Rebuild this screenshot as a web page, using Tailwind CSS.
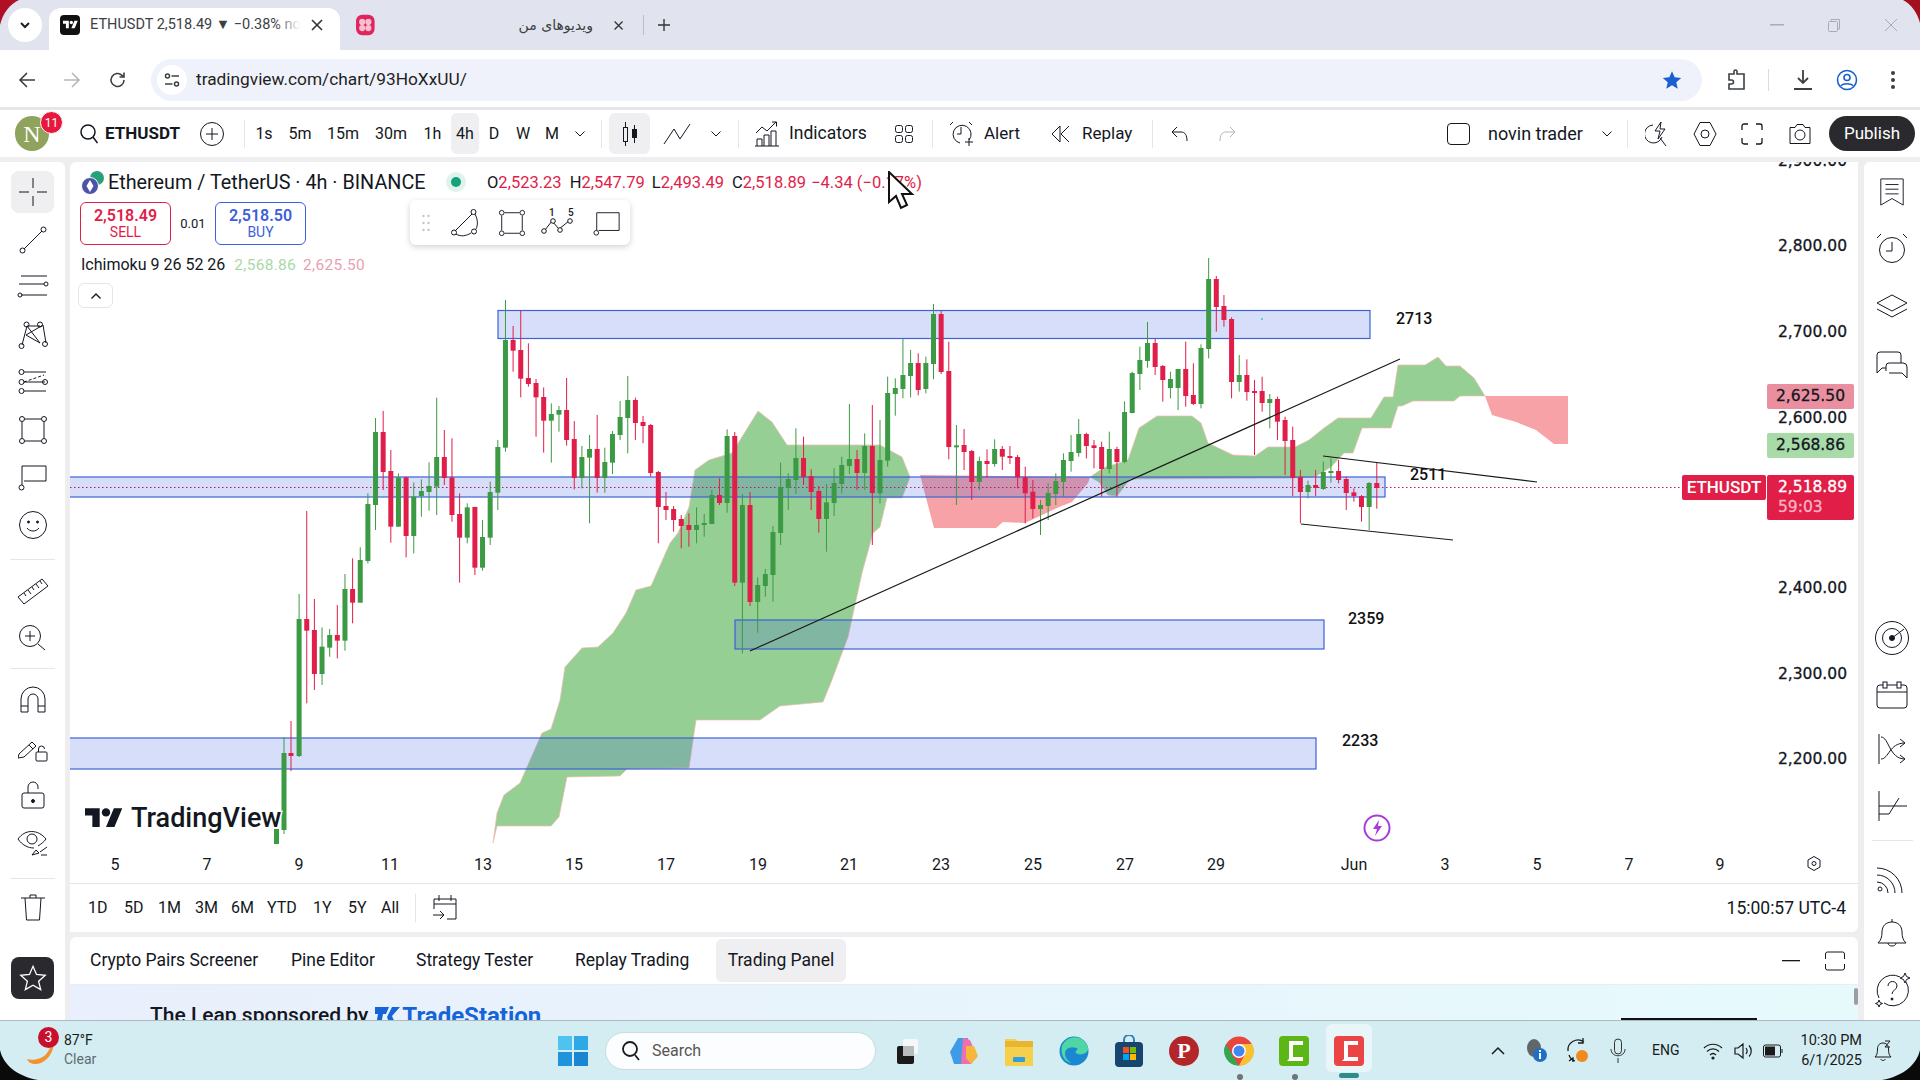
<!DOCTYPE html>
<html lang="en">
<head>
<meta charset="UTF-8">
<title>ETHUSDT chart</title>
<script src="https://cdn.jsdelivr.net/npm/@tailwindcss/browser@4"></script>
</head>
<body class="bg-[#eeeef1]">
<div class="relative w-[1920px] h-[1080px] overflow-hidden flex flex-col font-['Roboto',sans-serif] text-[#131722]">

  <!-- browser tab strip -->
  <div class="h-[50px] shrink-0 bg-[#e1e4ee] flex items-end">
    <div class="w-[34px] h-[34px] ml-[8px] mb-[8px] rounded-full bg-white flex items-center justify-center">
      <svg width="14" height="14" viewBox="0 0 14 14" fill="none" stroke="#1f1f1f" stroke-width="2"><path d="M3 5l4 4 4-4"/></svg>
    </div>
    <div class="relative w-[291px] h-[42px] pb-[8px] ml-[7px] bg-white rounded-t-xl flex items-center">
      <div class="ml-[11px] w-[20px] h-[20px] rounded-[4px] bg-[#111] flex items-center justify-center">
        <svg width="15" height="12" viewBox="0 0 36 28" fill="#fff"><path d="M14 22H7V11H0V4h14v18zM28 22h-8l7.5-18h8L28 22z"/><circle cx="20" cy="8" r="4"/></svg>
      </div>
      <div class="relative ml-[10px] w-[210px] overflow-hidden whitespace-nowrap text-[14.5px] text-[#3c4043]">ETHUSDT 2,518.49 ▼ −0.38% novin
        <div class="absolute right-0 top-0 w-[24px] h-full bg-linear-to-r from-white/0 to-white"></div>
      </div>
      <svg class="ml-[10px]" width="14" height="14" viewBox="0 0 14 14" stroke="#333" stroke-width="1.6"><path d="M2 2l10 10M12 2L2 12"/></svg>
    </div>
    <div class="relative w-[330px] h-[42px] pb-[8px] flex items-center">
      <svg class="ml-[15px]" width="24" height="26" viewBox="0 0 20 22"><rect x="1" y="1" width="18" height="20" rx="6" fill="#e0245e"/><g fill="#f7c0d2"><circle cx="7" cy="8" r="3"/><circle cx="13" cy="8" r="3"/><circle cx="7" cy="14" r="3"/><circle cx="13" cy="14" r="3"/></g></svg>
      <span dir="rtl" class="ml-[143px] w-[82px] text-[14px] text-[#3c4043] whitespace-nowrap font-['DejaVu_Sans',sans-serif]">ویدیوهای من</span>
      <svg class="ml-[20px]" width="13" height="13" viewBox="0 0 14 14" stroke="#333" stroke-width="1.6"><path d="M2 2l10 10M12 2L2 12"/></svg>
      <div class="ml-[19px] w-px h-[20px] bg-[#b9bcc6]"></div>
      <svg class="ml-[14px]" width="14" height="14" viewBox="0 0 14 14" stroke="#333" stroke-width="1.6"><path d="M7 0v14M0 7h14"/></svg>
    </div>
    <div class="ml-auto h-[42px] pb-[8px] flex items-center text-[#9aa0a6]">
      <svg width="14" height="2" viewBox="0 0 14 2" class="mr-[43px]"><rect width="14" height="1.5" fill="#a9acb6"/></svg>
      <svg width="14" height="14" viewBox="0 0 14 14" fill="none" stroke="#a9acb6" class="mr-[43px]"><rect x="1.5" y="3.5" width="9" height="10" rx="1"/><path d="M4 3V1.5h8.5V11H11"/></svg>
      <svg width="14" height="14" viewBox="0 0 14 14" stroke="#a9acb6" class="mr-[22px]"><path d="M1 1l12 12M13 1L1 13"/></svg>
    </div>
  </div>

  <!-- browser address row -->
  <div class="h-[57px] pt-[2px] shrink-0 bg-white flex items-center">
    <svg class="ml-[18px]" width="18" height="18" viewBox="0 0 18 18" fill="none" stroke="#3c4043" stroke-width="1.6"><path d="M17 9H2M9 2L2 9l7 7"/></svg>
    <svg class="ml-[27px]" width="18" height="18" viewBox="0 0 18 18" fill="none" stroke="#b4b7bc" stroke-width="1.6"><path d="M1 9h15M9 2l7 7-7 7"/></svg>
    <svg class="ml-[28px]" width="18" height="18" viewBox="0 0 18 18" fill="none" stroke="#3c4043" stroke-width="1.6"><path d="M15 9a6.5 6.5 0 1 1-2-4.7L15 6M15 1.5V6h-4.5"/></svg>
    <div class="ml-[24px] w-[1551px] h-[42px] rounded-full bg-[#eff2fb] flex items-center">
      <div class="ml-[6px] w-[30px] h-[30px] rounded-full bg-white flex items-center justify-center">
        <svg width="16" height="16" viewBox="0 0 16 16" fill="none" stroke="#3c4043" stroke-width="1.5"><circle cx="3.5" cy="4" r="2"/><path d="M7.5 4H15M1 12h7.5"/><circle cx="12.5" cy="12" r="2"/></svg>
      </div>
      <span class="ml-[9px] text-[17.3px] text-[#1f1f1f] w-[300px] whitespace-nowrap">tradingview.com/chart/93HoXxUU/</span>
      <svg class="ml-auto mr-[20px]" width="20" height="20" viewBox="0 0 24 24" fill="#1a5fd0"><path d="M12 1.5l3.2 7.2 7.8.8-5.9 5.2 1.8 7.8L12 18.4l-6.9 4.1 1.8-7.8L1 9.5l7.8-.8z"/></svg>
    </div>
    <svg class="ml-[25px]" width="20" height="22" viewBox="0 0 20 22" fill="none" stroke="#3c4043" stroke-width="1.6"><path d="M2 5h5V2.5a1.5 1.5 0 0 1 3 0V5h7v15H2v-5h2.5a2 2 0 0 0 0-4H2z"/></svg>
    <div class="ml-[21px] w-px h-[22px] bg-[#d7dbe2]"></div>
    <svg class="ml-[24px]" width="20" height="22" viewBox="0 0 20 22" fill="none" stroke="#3c4043" stroke-width="1.8"><path d="M10 1v13M5 9l5 5 5-5M1 20h18"/></svg>
    <svg class="ml-[23px]" width="22" height="22" viewBox="0 0 22 22" fill="none" stroke="#1a5fd0" stroke-width="1.6"><circle cx="11" cy="11" r="9.5"/><circle cx="11" cy="8.5" r="3"/><path d="M5 17c1.5-3 10.5-3 12 0"/></svg>
    <svg class="ml-[33px]" width="4" height="18" viewBox="0 0 4 18" fill="#3c4043"><circle cx="2" cy="2" r="2"/><circle cx="2" cy="9" r="2"/><circle cx="2" cy="16" r="2"/></svg>
  </div>
  <div class="h-[3px] shrink-0 bg-[#e6e6ea]"></div>

  <!-- chart top toolbar -->
  <div class="h-[47px] shrink-0 bg-white flex items-center text-[16px] whitespace-nowrap">
    <div class="relative ml-[15px] w-[34px] h-[35px] shrink-0 rounded-full bg-[#8fa35c] text-white text-[24px] flex items-center justify-center font-['Liberation_Serif',serif]">N
      <div class="absolute -top-[5px] left-[25px] w-[23px] h-[23px] rounded-full bg-[#e8173d] border border-white text-[12px] flex items-center justify-center font-['Roboto',sans-serif]">11</div>
    </div>
    <svg class="ml-[31px] shrink-0" width="18" height="20" viewBox="0 0 18 20" fill="none" stroke="#131722" stroke-width="1.5"><circle cx="8" cy="8" r="7"/><path d="M13 13l4.5 6"/></svg>
    <span class="ml-[7px] w-[95px] shrink-0 font-bold text-[17px]">ETHUSDT</span>
    <svg class="shrink-0" width="24" height="24" viewBox="0 0 24 24" fill="none" stroke="#131722"><circle cx="12" cy="12" r="11.5"/><path d="M12 6v12M6 12h12"/></svg>
    <div class="ml-[20px] w-px h-[28px] shrink-0 bg-[#e6e6ea]"></div>
    <div class="ml-px w-[36px] text-center shrink-0">1s</div>
    <div class="w-[36px] text-center shrink-0">5m</div>
    <div class="w-[50px] text-center shrink-0">15m</div>
    <div class="w-[46px] text-center shrink-0">30m</div>
    <div class="w-[37px] text-center shrink-0">1h</div>
    <div class="w-[28px] h-[41px] leading-[41px] text-center shrink-0 rounded-md bg-[#efeff2]">4h</div>
    <div class="w-[30px] text-center shrink-0">D</div>
    <div class="w-[28px] text-center shrink-0">W</div>
    <div class="w-[30px] text-center shrink-0">M</div>
    <div class="w-[26px] flex justify-center shrink-0"><svg width="12" height="8" viewBox="0 0 12 8" fill="none" stroke="#131722"><path d="M1.5 1.5L6 6l4.5-4.5"/></svg></div>
    <div class="ml-[8px] w-px h-[28px] shrink-0 bg-[#e6e6ea]"></div>
    <div class="ml-[7px] w-[41px] h-[41px] rounded-md bg-[#efeff2] flex items-center justify-center shrink-0">
      <svg width="18" height="28" viewBox="0 0 18 28" fill="none" stroke="#131722"><rect x="2.5" y="7.5" width="4" height="14"/><path d="M4.5 2v5.5M4.5 21.500V26"/><rect x="11.5" y="9.5" width="4" height="8" fill="#131722"/><path d="M13.5 5v4.5M13.5 17.5V23"/></svg>
    </div>
    <div class="w-[54px] flex justify-center shrink-0"><svg width="28" height="24" viewBox="0 0 28 24" fill="none" stroke="#131722"><path d="M1 22L11 7l6 10L27 2"/></svg></div>
    <div class="w-[24px] flex justify-center shrink-0"><svg width="12" height="8" viewBox="0 0 12 8" fill="none" stroke="#131722"><path d="M1.5 1.5L6 6l4.5-4.5"/></svg></div>
    <div class="ml-[10px] w-px h-[28px] shrink-0 bg-[#e6e6ea]"></div>
    <svg class="ml-[16px] shrink-0" width="26" height="26" viewBox="0 0 26 26" fill="none" stroke="#131722"><path d="M1 12l6-6 5 4 9-9M17 1h4.5v4.5"/><path d="M2 25v-7h5v7M9 25V14h5v11M16 25V10h5v15M0 25h24"/></svg>
    <span class="ml-[8px] w-[78px] shrink-0 text-[17.5px]">Indicators</span>
    <svg class="ml-[25px] shrink-0" width="24" height="24" viewBox="0 0 24 24" fill="none" stroke="#131722"><rect x="3.5" y="3.5" width="7" height="7" rx="2"/><rect x="13.5" y="3.5" width="7" height="7" rx="2"/><rect x="3.5" y="13.5" width="7" height="7" rx="2"/><rect x="13.5" y="13.5" width="7" height="7" rx="2"/></svg>
    <div class="ml-[16px] w-px h-[28px] shrink-0 bg-[#e6e6ea]"></div>
    <svg class="ml-[17px] shrink-0" width="24" height="26" viewBox="0 0 24 26" fill="none" stroke="#131722"><path d="M19 19a9 9 0 1 0-9 3"/><path d="M11 6v7H7M3 1L0 4M19 1l3 3M19 17v8M15 21h8"/></svg>
    <span class="ml-[10px] w-[38px] shrink-0 text-[17px]">Alert</span>
    <svg class="ml-[29px] shrink-0" width="20" height="20" viewBox="0 0 20 20" fill="none" stroke="#131722"><path d="M9 2L1 10l8 8zM18 2l-8 8 8 8"/></svg>
    <span class="ml-[11px] w-[52px] shrink-0 text-[17px]">Replay</span>
    <div class="ml-[18px] w-px h-[28px] shrink-0 bg-[#e6e6ea]"></div>
    <svg class="ml-[17px] shrink-0" width="20" height="20" viewBox="0 0 20 20" fill="none" stroke="#131722"><path d="M7 3L2 8l5 5M2 8h9c4 0 6 3 6 9"/></svg>
    <svg class="ml-[27px] shrink-0" width="20" height="20" viewBox="0 0 20 20" fill="none" stroke="#b2b5be"><path d="M13 3l5 5-5 5M18 8H9c-4 0-6 3-6 9"/></svg>
    <div class="ml-[210px] w-[23px] h-[22px] shrink-0 rounded-[4px] border border-[#131722]"></div>
    <span class="ml-[18px] w-[97px] shrink-0 text-[18px]">novin trader</span>
    <div class="ml-[15px] w-[14px] flex justify-center shrink-0"><svg width="12" height="8" viewBox="0 0 12 8" fill="none" stroke="#131722"><path d="M1.5 1.5L6 6l4.5-4.5"/></svg></div>
    <div class="ml-[13px] w-px h-[28px] shrink-0 bg-[#e6e6ea]"></div>
    <svg class="ml-[17px] shrink-0" width="24" height="26" viewBox="0 0 24 26" fill="none" stroke="#131722"><path d="M8 4a9 9 0 1 0 9 12M15 17l6 8M16 1l-6 9h5l-2 8 7-10h-5z"/></svg>
    <svg class="ml-[24px] shrink-0" width="24" height="26" viewBox="0 0 24 26" fill="none" stroke="#131722"><path d="M7 1.5h10L23 13l-6 11.5H7L1 13z"/><circle cx="12" cy="13" r="4"/></svg>
    <svg class="ml-[23px] shrink-0" width="24" height="24" viewBox="0 0 24 24" fill="none" stroke="#131722" stroke-width="1.3"><path d="M8 2H4a2 2 0 0 0-2 2v4M16 2h4a2 2 0 0 1 2 2v4M8 22H4a2 2 0 0 1-2-2v-4M16 22h4a2 2 0 0 0 2-2v-4"/></svg>
    <svg class="ml-[24px] shrink-0" width="24" height="24" viewBox="0 0 24 24" fill="none" stroke="#131722"><path d="M2 5.5h5l2-3h6l2 3h5v16H2z"/><circle cx="12" cy="13" r="5"/></svg>
    <div class="ml-[17px] w-[86px] h-[35px] shrink-0 rounded-full bg-[#2a2a2e] text-white text-[17px] flex items-center justify-center">Publish</div>
  </div>

  <div class="h-[5px] shrink-0"></div>

  <div class="flex-1 flex min-h-0">
    <!-- left drawing tools -->
    <div class="w-[65px] shrink-0 bg-white rounded-tr-md flex flex-col items-center pt-[6.5px]">
      <div class="h-[47.5px] flex items-center"><div class="w-[43px] h-[42px] rounded-lg bg-[#efeff2] flex items-center justify-center"><svg width="30" height="30" viewBox="0 0 30 30" stroke="#131722"><path d="M15 1v10M15 19v10M1 15h10M19 15h10"/></svg></div></div>
      <div class="h-[47.5px] flex items-center"><svg width="30" height="30" viewBox="0 0 30 30" fill="none" stroke="#131722"><path d="M6 24L24 6"/><circle cx="4.5" cy="25.5" r="2.5"/><circle cx="25.5" cy="4.5" r="2.5"/></svg></div>
      <div class="h-[47.5px] flex items-center"><svg width="32" height="30" viewBox="0 0 32 30" fill="none" stroke="#131722"><path d="M4 4h26M2 12h25M4 23h26"/><circle cx="29" cy="12" r="2"/><circle cx="3" cy="23" r="2"/></svg></div>
      <div class="h-[47.5px] flex items-center"><svg width="30" height="30" viewBox="0 0 30 30" fill="none" stroke="#131722"><path d="M4 25L9 6l13 17-14-8 17-10 3 18M9 6l13 0"/><circle cx="3.5" cy="26" r="2.5"/><circle cx="8.5" cy="4.5" r="2.5"/><circle cx="22" cy="4.5" r="2.5"/><circle cx="27" cy="24" r="2.5"/></svg></div>
      <div class="h-[47.5px] flex items-center"><svg width="30" height="30" viewBox="0 0 30 30" fill="none" stroke="#131722"><path d="M6 5h22M6 15h21M6 24h22"/><path stroke-dasharray="3 2" d="M6 15l20-7"/><circle cx="3.5" cy="5" r="2.5"/><circle cx="3.5" cy="15" r="2.5"/><circle cx="3.5" cy="24" r="2.5"/><circle cx="27" cy="15" r="2.5"/></svg></div>
      <div class="h-[47.5px] flex items-center"><svg width="30" height="30" viewBox="0 0 30 30" fill="none" stroke="#131722"><path d="M7 4h16M7 26h16M4 7v16M26 7v16"/><circle cx="4" cy="4" r="2.5"/><circle cx="26" cy="4" r="2.5"/><circle cx="4" cy="26" r="2.5"/><circle cx="26" cy="26" r="2.5"/></svg></div>
      <div class="h-[47.5px] flex items-center"><svg width="30" height="30" viewBox="0 0 30 30" fill="none" stroke="#131722"><path d="M4 23V4h24v15H6"/><circle cx="3.5" cy="25.5" r="2.5"/></svg></div>
      <div class="h-[47.5px] flex items-center"><svg width="30" height="30" viewBox="0 0 30 30" fill="none" stroke="#131722"><circle cx="15" cy="15" r="13.5"/><circle cx="10.5" cy="12" r="1" fill="#131722"/><circle cx="19.5" cy="12" r="1" fill="#131722"/><path d="M9 18c3 4 9 4 12 0"/></svg></div>
      <div class="mt-[10px] mb-[6px] w-[45px] h-px bg-[#e6e6ea]"></div>
      <div class="h-[48px] flex items-center"><svg width="32" height="30" viewBox="0 0 32 30" fill="none" stroke="#131722"><path d="M1 22L25 4l6 7L7 29zM7 18l2 3M11 15l3 4M15 12l2 3M19 9l3 4M23 6l2 3"/></svg></div>
      <div class="h-[48px] flex items-center"><svg width="30" height="28" viewBox="0 0 30 28" fill="none" stroke="#131722"><circle cx="12" cy="12" r="10.5"/><path d="M12 7v10M7 12h10M20 20l7 6"/></svg></div>
      <div class="mt-[6px] mb-[8px] w-[45px] h-px bg-[#e6e6ea]"></div>
      <div class="h-[47.5px] flex items-center"><svg width="28" height="28" viewBox="0 0 28 28" fill="none" stroke="#131722"><path d="M2 26V13a12 12 0 0 1 24 0v13h-7V13a5 5 0 0 0-10 0v13zM2 20h7M19 20h7"/></svg></div>
      <div class="h-[47.5px] flex items-center"><svg width="30" height="30" viewBox="0 0 30 30" fill="none" stroke="#131722"><path d="M1 21L14 9l4 4L6 24l-6 1zM11 12l4 4"/><rect x="18" y="19" width="11" height="9" rx="1"/><path d="M20.5 19v-3a3 3 0 0 1 6 0"/></svg></div>
      <div class="h-[47.5px] flex items-center"><svg width="26" height="30" viewBox="0 0 26 30" fill="none" stroke="#131722"><rect x="2" y="13" width="22" height="15" rx="2"/><path d="M8 13V7a5 5 0 0 1 10 0v2"/><circle cx="13" cy="21" r="1.5" fill="#131722"/></svg></div>
      <div class="h-[47.5px] flex items-center"><svg width="32" height="30" viewBox="0 0 32 30" fill="none" stroke="#131722"><path d="M1 11c7-10 20-10 28 0-2 3-5 5-8 7M17 20c-6 0-12-3-16-9"/><circle cx="15" cy="11" r="5"/><path d="M15 27l4-5 3 3zM23 24l7-5M24 27h6"/></svg></div>
      <div class="mt-[11px] mb-[4px] w-[45px] h-px bg-[#e6e6ea]"></div>
      <div class="h-[48px] flex items-center"><svg width="26" height="28" viewBox="0 0 26 28" fill="none" stroke="#131722"><path d="M1 5h24M5 5l1.5 22h13L21 5M10 5V2h6v3"/></svg></div>
      <div class="mt-auto mb-[21px] w-[43px] h-[42px] rounded-lg bg-[#2a2a2e] flex items-center justify-center">
        <svg width="28" height="28" viewBox="0 0 24 24" fill="none" stroke="#fff" stroke-width="1.1"><path d="M12 2l3 7 7.5.7-5.7 5 1.8 7.3L12 18.2 5.4 22l1.8-7.3-5.7-5L9 9z"/></svg>
      </div>
    </div>

    <div class="w-[5px] shrink-0"></div>

    <!-- chart and its panels -->
    <div class="w-[1788px] shrink-0 flex flex-col">
      <div class="relative h-[721px] shrink-0 bg-white rounded-tl-md overflow-hidden">
        <svg id="chart" width="1788" height="721" viewBox="70 162 1788 721" class="block"></svg>

        <!-- legend -->
        <div class="absolute left-[11px] top-[8px] w-[24px] h-[24px]">
          <svg width="24" height="26" viewBox="0 0 24 26"><circle cx="16" cy="8" r="7" fill="#26a17b"/><circle cx="9" cy="16" r="8.5" fill="#4a54a8" stroke="#fff"/><path d="M9 10l3.5 6-3.5 6-3.5-6z" fill="#fff"/></svg>
        </div>
        <div class="absolute left-[38px] top-[9px] text-[19.8px] leading-[24px] whitespace-nowrap">Ethereum / TetherUS · 4h · BINANCE</div>
        <div class="absolute left-[376px] top-[10px] w-[20px] h-[20px] rounded-full bg-[#dff3ec] flex items-center justify-center"><div class="w-[10px] h-[10px] rounded-full bg-[#12a37a]"></div></div>
        <div class="absolute left-[417px] top-[10px] text-[16.5px] leading-[22px] whitespace-nowrap text-[#e01e4a]"><span class="text-[#131722]">O</span>2,523.23 <span class="text-[#131722] ml-[4px]">H</span>2,547.79 <span class="text-[#131722] ml-[3px]">L</span>2,493.49 <span class="text-[#131722] ml-[4px]">C</span>2,518.89 <span class="ml-[1px]">−4.34 (−0.17%)</span></div>

        <div class="absolute left-[10px] top-[40px] flex items-center">
          <div class="w-[91px] h-[43px] rounded-md border border-[#e01e4a] bg-white text-[#e01e4a] flex flex-col items-center justify-center leading-[17px]">
            <span class="text-[16px] font-semibold">2,518.49</span><span class="text-[14px]">SELL</span>
          </div>
          <div class="w-[44px] text-center text-[13px]">0.01</div>
          <div class="w-[91px] h-[43px] rounded-md border border-[#3d5fd9] bg-white text-[#3d5fd9] flex flex-col items-center justify-center leading-[17px]">
            <span class="text-[16px] font-semibold">2,518.50</span><span class="text-[14px]">BUY</span>
          </div>
        </div>
        <div class="absolute left-[11px] top-[93px] text-[16px] leading-[20px] whitespace-nowrap">Ichimoku 9 26 52 26 <span class="ml-[5px] text-[15.5px] tracking-[0.3px] text-[#a9d9a9]">2,568.86</span> <span class="ml-[3px] text-[15.5px] tracking-[0.3px] text-[#eba0b2]">2,625.50</span></div>
        <div class="absolute left-[8px] top-[121px] w-[35px] h-[25px] rounded-md border border-[#e6e6ea] bg-white flex items-center justify-center">
          <svg width="12" height="8" viewBox="0 0 12 8" fill="none" stroke="#131722" stroke-width="1.4"><path d="M1.5 6.5L6 2l4.5 4.5"/></svg>
        </div>

        <!-- floating favourites toolbar -->
        <div class="absolute left-[340px] top-[38px] w-[220px] h-[45px] rounded-md bg-white shadow-[0_2px_6px_rgba(0,0,0,0.18)] flex items-center">
          <svg class="ml-[12px]" width="8" height="18" viewBox="0 0 8 18" fill="#c4c6cc"><circle cx="1.5" cy="2" r="1.2"/><circle cx="6.5" cy="2" r="1.2"/><circle cx="1.5" cy="9" r="1.2"/><circle cx="6.5" cy="9" r="1.2"/><circle cx="1.5" cy="16" r="1.2"/><circle cx="6.5" cy="16" r="1.2"/></svg>
          <svg class="ml-[20px]" width="30" height="30" viewBox="0 0 30 30" fill="none" stroke="#131722"><path d="M5 23L22 6M25 6c3 6 3 11 1 15M6 26c5 3 10 2 15-1"/><circle cx="4" cy="24.5" r="2.5"/><circle cx="23.5" cy="4" r="2.5"/><circle cx="24" cy="23.5" r="2.5"/></svg>
          <svg class="ml-[18px]" width="28" height="28" viewBox="0 0 30 30" fill="none" stroke="#131722"><path d="M7 4h16M7 26h16M4 7v16M26 7v16"/><circle cx="4" cy="4" r="2.5"/><circle cx="26" cy="4" r="2.5"/><circle cx="4" cy="26" r="2.5"/><circle cx="26" cy="26" r="2.5"/></svg>
          <div class="ml-[15px] relative w-[34px] h-[30px]">
            <svg width="34" height="30" viewBox="0 0 34 30" fill="none" stroke="#131722"><path d="M4 22l7-9 7 8 10-8"/><circle cx="3" cy="23" r="2.3" fill="#fff"/><circle cx="12" cy="13" r="2.3" fill="#fff"/><circle cx="19" cy="22" r="2.3" fill="#fff"/><circle cx="29" cy="13" r="2.3" fill="#fff"/></svg>
            <span class="absolute left-[8px] -top-[3px] text-[10px] font-medium">1</span><span class="absolute left-[27px] -top-[3px] text-[10px] font-medium">5</span>
          </div>
          <svg class="ml-[18px]" width="28" height="28" viewBox="0 0 30 30" fill="none" stroke="#131722"><path d="M4 23V4h24v19H6"/><circle cx="3.5" cy="25.5" r="2.5"/></svg>
        </div>

        <!-- last price tags -->
        <div class="absolute left-[1697px] top-[222px] w-[87px] h-[25px] rounded-[2px] bg-[#ea8f9f] text-[15.5px] leading-[25px] text-center font-['DejaVu_Sans',sans-serif] [-webkit-text-stroke:0.3px]">2,625.50</div>
        <div class="absolute left-[1697px] top-[271px] w-[87px] h-[25px] rounded-[2px] bg-[#a8dba8] text-[15.5px] leading-[25px] text-center font-['DejaVu_Sans',sans-serif] [-webkit-text-stroke:0.3px]">2,568.86</div>
        <div class="absolute left-[1612px] top-[313px] w-[84px] h-[25px] rounded-[2px] bg-[#e01e47] text-white text-[17px] font-medium leading-[25px] text-center">ETHUSDT</div>
        <div class="absolute left-[1697px] top-[313px] w-[87px] h-[45px] rounded-[2px] bg-[#e01e47] text-white text-[15.5px] leading-[20px] pt-[2px] pl-[11px] font-['DejaVu_Sans',sans-serif] [-webkit-text-stroke:0.3px]">2,518.89<br><span class="text-[#f9b4c2]">59:03</span></div>

        <!-- mouse pointer from the recording -->
        <svg class="absolute left-[817px] top-[9px]" width="30" height="42" viewBox="0 0 30 42"><path d="M2 1v30l7-6 5 12 6-3-5-11h10z" fill="#fff" stroke="#111" stroke-width="2"/></svg>
      </div>

      <!-- date range row -->
      <div class="h-[49px] shrink-0 bg-white border-t border-[#e6e6ea] rounded-br-md flex items-center text-[16px] whitespace-nowrap">
        <span class="ml-[18px] w-[36px]">1D</span><span class="w-[34px]">5D</span><span class="w-[37px]">1M</span><span class="w-[36px]">3M</span><span class="w-[36px]">6M</span><span class="w-[46px]">YTD</span><span class="w-[35px]">1Y</span><span class="w-[33px]">5Y</span><span class="w-[34px]">All</span>
        <div class="w-px h-[28px] bg-[#e6e6ea]"></div>
        <svg class="ml-[16px]" width="26" height="28" viewBox="0 0 26 28" fill="none" stroke="#131722"><path d="M2 15V5h22v20h-9M2 10h22M7 1v6M19 1v6M1 21h11M8 17l4 4-4 4"/></svg>
        <span class="ml-auto mr-[12px] text-[17.5px]">15:00:57 UTC-4</span>
      </div>
      <div class="h-[5px] shrink-0"></div>

      <!-- bottom panel tabs -->
      <div class="h-[47px] shrink-0 bg-white rounded-t-md flex items-center text-[17.5px] whitespace-nowrap">
        <span class="ml-[20px] w-[168px]">Crypto Pairs Screener</span>
        <span class="ml-[33px] w-[85px]">Pine Editor</span>
        <span class="ml-[40px] w-[119px]">Strategy Tester</span>
        <span class="ml-[40px] w-[114px]">Replay Trading</span>
        <div class="ml-[27px] w-[130px] h-[43px] rounded-md bg-[#efeff2] flex items-center justify-center">Trading Panel</div>
        <svg class="ml-auto mr-[24px]" width="18" height="4" viewBox="0 0 18 4"><rect y="1" width="18" height="1.3" fill="#131722"/></svg>
        <svg class="mr-[12px]" width="22" height="22" viewBox="0 0 22 22" fill="none" stroke="#131722"><path d="M1.5 9V4a2 2 0 0 1 2-2h15a2 2 0 0 1 2 2v5M1.5 14v4a2 2 0 0 0 2 2h15a2 2 0 0 0 2-2v-4"/></svg>
      </div>
      <div class="relative flex-1 bg-linear-to-r from-[#e9effc] to-[#e6fafc] border-t border-[#e9ecf2] overflow-hidden">
        <div class="absolute left-[80px] top-[13px] flex items-center text-[21px] font-medium whitespace-nowrap">The Leap sponsored by
          <svg class="ml-[7px]" width="26" height="20" viewBox="0 0 26 20" fill="#1565d8"><path d="M0 1h14l-3 7H8l-2 11H1L3 8H0zM17 1h8l-8 9 4 9h-6l-3-8z"/></svg>
          <span class="ml-[1px] text-[24px] text-[#1565d8] font-bold">TradeStation</span>
        </div>
        <div class="absolute left-[1551px] bottom-0 w-[136px] h-[2px] bg-[#111]"></div>
        <div class="absolute right-[0px] top-[3px] w-[4px] h-[17px] rounded-full bg-[#9b9ea6]"></div>
      </div>
    </div>

    <div class="w-[6px] shrink-0"></div>

    <!-- right widget bar -->
    <div class="flex-1 bg-white rounded-tl-md flex flex-col items-center pt-[6px]">
      <div class="h-[48px] flex items-center"><svg width="28" height="32" viewBox="0 0 30 32" fill="none" stroke="#131722"><path d="M3 2h24v28l-12-7-12 7zM8 8h14M8 13h14M8 18h14"/></svg></div>
      <div class="h-[64px] flex items-center"><svg width="32" height="32" viewBox="0 0 32 32" fill="none" stroke="#131722"><circle cx="16" cy="18" r="12.5"/><path d="M16 10v9h-6M5 2L1 6M27 2l4 4"/></svg></div>
      <div class="h-[52px] flex items-center"><svg width="32" height="28" viewBox="0 0 32 28" fill="none" stroke="#131722"><path d="M1 11L16 3l15 8-15 8zM1 17l15 8 15-8"/></svg></div>
      <div class="h-[66px] flex items-center"><svg width="32" height="30" viewBox="0 0 32 30" fill="none" stroke="#131722"><path d="M10 18H6l-5 5V5a3 3 0 0 1 3-3h18a3 3 0 0 1 3 3v8H13a3 3 0 0 0-3 3v5M25 13h2a4 4 0 0 1 4 4v11l-5-5H13"/></svg></div>
      <div class="h-[214px]"></div>
      <div class="h-[52px] flex items-center"><svg width="36" height="36" viewBox="0 0 36 36" fill="none" stroke="#131722"><circle cx="18" cy="18" r="16.5"/><circle cx="18" cy="18" r="9.5"/><circle cx="18" cy="18" r="2.5" fill="#131722"/><path d="M18 18L30 9"/></svg></div>
      <div class="h-[62px] flex items-center"><svg width="32" height="28" viewBox="0 0 32 28" fill="none" stroke="#131722"><rect x="1" y="4" width="30" height="23" rx="3"/><path d="M1 11h30"/><rect x="7" y="1" width="4" height="6" fill="#fff"/><rect x="21" y="1" width="4" height="6" fill="#fff"/></svg></div>
      <div class="h-[46px] flex items-center"><svg width="32" height="32" viewBox="0 0 32 32" fill="none" stroke="#131722"><path d="M3 1v30M5 4c8 0 8 22 24 22M5 26c8 0 8-16 24-16M24 6l5 4-5 4M24 22l5 4-5 4"/></svg></div>
      <div class="h-[68px] flex items-center"><svg width="32" height="32" viewBox="0 0 32 32" fill="none" stroke="#131722"><path d="M3 1v30M3 24h10l10-16M3 16h28"/></svg></div>
      <div class="w-[41px] h-px bg-[#e6e6ea]"></div>
      <div class="h-[74px] flex items-center"><svg width="32" height="32" viewBox="0 0 32 32" fill="none" stroke="#131722"><circle cx="4" cy="27" r="2"/><path d="M1 20a11 11 0 0 1 11 11M1 13a18 18 0 0 1 18 18M1 6a25 25 0 0 1 25 25"/></svg></div>
      <div class="h-[38px] flex items-center"><svg width="30" height="32" viewBox="0 0 30 32" fill="none" stroke="#131722"><path d="M1 25h28c-3-3-4-6-4-11 0-6-4-10-10-10S5 8 5 14c0 5-1 8-4 11zM15 4V1M11 25c0 4 8 4 8 0"/></svg></div>
      <div class="mt-[17px] h-[40px] flex items-center"><svg width="36" height="36" viewBox="0 0 36 36" fill="none" stroke="#131722"><path d="M26 5a15.5 15.5 0 0 0-21 21M10 31A15.5 15.5 0 0 0 32 10"/><path d="M14 14c0-6 9-6 9 0 0 4-5 4-5 8"/><circle cx="18" cy="27" r="1" fill="#131722"/><path d="M31 1l1.5 3.5L36 6l-3.5 1.5L31 11l-1.5-3.500L26 6l3.500-1.500zM5 28l1 2.500 2.500 1-2.500 1-1 2.500-1-2.500-2.500-1 2.500-1z"/></svg></div>
    </div>
  </div>

  <!-- windows taskbar -->
  <div class="h-[60px] shrink-0 bg-[#d3edf2] border-t border-[#aeb9bd] flex items-center text-[#1a1a1a] whitespace-nowrap">
    <div class="relative w-[558px] shrink-0 h-full">
      <svg class="absolute left-[26px] top-[16px]" width="30" height="30" viewBox="0 0 30 30"><path d="M28 1c1 14-7 25-18 26C5 27 2 25 1 22c6 2 16 0 20-6 3-4 5-9 7-15z" fill="#f3922e"/></svg>
      <div class="absolute left-[38px] top-[6px] w-[21px] h-[21px] rounded-full bg-[#c8102e] text-white text-[14px] flex items-center justify-center">3</div>
      <div class="absolute left-[64px] top-[10px] text-[14px] leading-[19px]">87°F<br><span class="text-[#5c6b70]">Clear</span></div>
    </div>
    <svg class="shrink-0" width="30" height="30" viewBox="0 0 30 30"><rect width="14" height="14" fill="#4fc3f0"/><rect x="16" width="14" height="14" fill="#2ea8e6"/><rect y="16" width="14" height="14" fill="#1f93dc"/><rect x="16" y="16" width="14" height="14" fill="#1a86d2"/></svg>
    <div class="ml-[17px] w-[271px] h-[38px] shrink-0 rounded-full bg-white/90 border border-[#c9dcdf] flex items-center">
      <svg class="ml-[15px]" width="20" height="22" viewBox="0 0 20 22" fill="none" stroke="#1a1a1a" stroke-width="1.8"><circle cx="9" cy="9" r="7"/><path d="M14 15l4 5"/></svg>
      <span class="ml-[11px] text-[16px] text-[#555]">Search</span>
    </div>
    <div class="ml-[5.5px] w-[55px] flex justify-center shrink-0"><svg width="30" height="30" viewBox="0 0 30 30"><rect x="9" y="3" width="15" height="15" rx="2" fill="#f5f7f8"/><rect x="3" y="10" width="17" height="18" rx="2" fill="#1a1a1a"/><rect x="9" y="10" width="11" height="10" fill="#b9bcbd"/></svg></div>
    <div class="w-[55px] flex justify-center shrink-0"><svg width="30" height="30" viewBox="0 0 30 30"><path d="M9 2h10l-4 26H5L1 16z" fill="#3f9ae8"/><path d="M14 2c5 0 8 2 9 7l5 12-6 7H12z" fill="#ee6fb0"/><path d="M17 10h8l4 10-7 8-5-6z" fill="#f5b73d"/></svg></div>
    <div class="w-[55px] flex justify-center shrink-0"><svg width="30" height="30" viewBox="0 0 30 30"><path d="M1 3h11l2 3h15v24H1z" fill="#f6cf4d"/><rect x="1" y="5" width="28" height="6" fill="#e9b52f"/><rect x="9" y="21" width="12" height="5" rx="1" fill="#2f9ee3"/></svg></div>
    <div class="w-[55px] flex justify-center shrink-0"><svg width="30" height="30" viewBox="0 0 30 30"><circle cx="15" cy="15" r="14.500" fill="#1b87d0"/><path d="M3 10C8-2 26-2 29 12c1 6-9 8-12 5-1-1 0-3 2-4-2-2-9-3-12 1-2 3-1 9 5 13-6-1-11-8-9-17z" fill="#4fd6a5"/></svg></div>
    <div class="w-[55px] flex justify-center shrink-0"><svg width="30" height="32" viewBox="0 0 30 32"><path d="M10 8V5a5 5 0 0 1 10 0v3" fill="none" stroke="#2d7fb8" stroke-width="2"/><rect x="1" y="7" width="28" height="25" rx="4" fill="#17456f"/><rect x="9" y="12" width="6" height="6" fill="#f25022"/><rect x="16" y="12" width="6" height="6" fill="#7fba00"/><rect x="9" y="19" width="6" height="6" fill="#00a4ef"/><rect x="16" y="19" width="6" height="6" fill="#ffb900"/></svg></div>
    <div class="w-[55px] flex justify-center shrink-0"><div class="w-[30px] h-[30px] rounded-full bg-[#b3262a] text-white text-[22px] font-bold flex items-center justify-center font-['Liberation_Serif',serif]">P</div></div>
    <div class="relative w-[55px] flex justify-center shrink-0"><svg width="30" height="30" viewBox="0 0 30 30"><circle cx="15" cy="15" r="14.500" fill="#e8453c"/><path d="M2 8l8 14 5 7.500A14.500 14.500 0 0 1 2 8z" fill="#2fa84f"/><path d="M15 8h13a14.500 14.500 0 0 1-13 21.500l7-13z" fill="#fbc02d"/><circle cx="15" cy="15" r="7" fill="#fff"/><circle cx="15" cy="15" r="5.500" fill="#4285f4"/></svg><div class="absolute left-[25px] top-[38px] w-[6px] h-[6px] rounded-full bg-[#6d7578]"></div></div>
    <div class="relative w-[55px] flex justify-center shrink-0"><svg width="30" height="30" viewBox="0 0 30 30"><rect width="30" height="30" rx="4" fill="#5cb615"/><path d="M10 5h14v4H14v12h10v4H8l2-2z" fill="#fff"/></svg><div class="absolute left-[25px] top-[38px] w-[6px] h-[6px] rounded-full bg-[#6d7578]"></div></div>
    <div class="relative w-[55px] flex justify-center shrink-0">
      <div class="absolute left-[4px] -top-[12px] w-[46px] h-[48px] rounded-md bg-white/50"></div>
      <svg class="relative" width="30" height="30" viewBox="0 0 30 30"><rect width="30" height="30" rx="4" fill="#ea4444"/><path d="M10 5h14v4H14v12h10v4H8l2-2z" fill="#fff"/></svg>
      <div class="absolute left-[17px] top-[37px] w-[20px] h-[5px] rounded-full bg-[#2e8b8b]"></div>
    </div>
    <div class="w-[109.5px] shrink-0"></div>
    <div class="w-[24px] flex justify-center shrink-0"><svg width="14" height="10" viewBox="0 0 14 10" fill="none" stroke="#1a1a1a" stroke-width="1.500"><path d="M1 8l6-6 6 6"/></svg></div>
    <div class="ml-[12px] w-[30px] flex justify-center shrink-0"><svg width="24" height="26" viewBox="0 0 24 26"><ellipse cx="9" cy="10" rx="7" ry="9" fill="#5f676b"/><circle cx="15" cy="17" r="7" fill="#1f6fc4"/><rect x="14" y="15" width="2" height="6" fill="#fff"/><rect x="14" y="12" width="2" height="2" fill="#fff"/></svg></div>
    <div class="ml-[11px] w-[30px] flex justify-center shrink-0"><svg width="24" height="28" viewBox="0 0 24 28" fill="none" stroke="#1a1a1a" stroke-width="1.300"><path d="M2 14A10 10 0 0 1 18 5M17 1v5h-5M3 24l4-3v4"/><path d="M3 18c1 3 3 5 6 6"/><circle cx="16" cy="19" r="6" fill="#f08a1d" stroke="none"/></svg></div>
    <div class="ml-[10px] w-[30px] flex justify-center shrink-0"><svg width="16" height="26" viewBox="0 0 16 26" fill="none" stroke="#333"><rect x="4.500" y="1" width="7" height="15" rx="3.500"/><path d="M1 11c0 9 14 9 14 0M8 20v5"/></svg></div>
    <span class="ml-[19px] w-[28px] shrink-0 text-[14px]">ENG</span>
    <div class="ml-[23px] w-[20px] flex justify-center shrink-0"><svg width="20" height="18" viewBox="0 0 20 18" fill="none" stroke="#1a1a1a" stroke-width="1.200"><path d="M1 6c5-5 13-5 18 0M4 9.500c3.500-3.500 8.500-3.500 12 0M7 13c2-2 4-2 6 0"/><circle cx="10" cy="16" r="1" fill="#1a1a1a"/></svg></div>
    <div class="ml-[11px] w-[20px] flex justify-center shrink-0"><svg width="20" height="18" viewBox="0 0 20 18" fill="none" stroke="#1a1a1a" stroke-width="1.200"><path d="M1 6v6h3l5 4V2L4 6zM12 6c1.500 2 1.500 4 0 6M15 3.500c3 3 3 8 0 11"/></svg></div>
    <div class="ml-[9px] w-[20px] flex justify-center shrink-0"><svg width="20" height="14" viewBox="0 0 20 14" fill="none" stroke="#1a1a1a"><rect x="0.500" y="1" width="17" height="12" rx="2"/><rect x="2.500" y="3" width="9" height="8" fill="#1a1a1a"/><path d="M19 5v4"/></svg></div>
    <div class="ml-[9px] w-[70px] shrink-0 text-right text-[14.5px] leading-[20px]">10:30 PM<br>6/1/2025</div>
    <div class="ml-[11px] w-[20px] flex justify-center shrink-0"><svg width="18" height="22" viewBox="0 0 18 22" fill="none" stroke="#1a1a1a"><path d="M1 17h16c-2-2-2.500-4-2.500-8C14.500 5 12 3 9 3S3.500 5 3.500 9c0 4-.5 6-2.500 8zM7 19c0 2 4 2 4 0M11 1h5l-5 6h5"/></svg></div>
  </div>

  <!-- wallpaper showing in the window corners -->
  <svg class="absolute left-0 top-0" width="20" height="26" viewBox="0 0 20 26"><path d="M0 0h19C10 4 3 13 0 25z" fill="#b01025"/></svg>
  <svg class="absolute right-0 top-0" width="18" height="24" viewBox="0 0 18 24"><path d="M18 0H1c8 4 14 12 17 23z" fill="#a5101f"/></svg>
  <svg class="absolute left-0 bottom-0" width="40" height="30" viewBox="0 0 40 30"><path d="M0 0c3 14 16 26 38 30H0z" fill="#0a0a0a"/></svg>
  <svg class="absolute right-0 bottom-0" width="40" height="30" viewBox="0 0 40 30"><path d="M40 0c-3 14-16 26-38 30h38z" fill="#0a0a0a"/></svg>
</div>

<script>
  // candles read off the chart: colour, wick top, body top, body bottom, wick bottom
  const GREEN = "#3d9a44", RED = "#e01e4a", CLOUD_G = "#95cf93", CLOUD_R = "#f6a2a6";
  const svg = document.getElementById("chart");
  const NS = "http://www.w3.org/2000/svg";

  function add(tag, attrs, text) {
    const el = document.createElementNS(NS, tag);
    for (const k in attrs) el.setAttribute(k, attrs[k]);
    if (text) el.textContent = text;
    svg.appendChild(el);
    return el;
  }

  const first = [
    "G 942 1017 1428 1431","R 693 1017 1052 1270","R 957 1050 1182 1230","G 1042 1100 1182 1215","G 1047 1065 1103 1130",
    "R 975 1065 1082 1135","G 882 927 1082 1112","R 835 927 968 1030","G 802 840 968 968","G 640 672 843 850",
    "G 414 456 675 750","R 393 456 576 630","R 510 573 740 788","G 580 592 740 740","R 590 592 768 832",
    "G 607 650 768 820","G 598 633 648 710","G 547 618 636 692","G 353 531 620 705","R 450 531 594 615",
    "R 475 592 705 725","R 640 702 773 908","G 670 682 773 790","R 680 681 863 885","G 720 771 863 872",
    "G 605 636 773 795","G 480 501 638 690","G 60 180 503 515","R 138 180 212 275","R 90 210 296 352",
    "R 190 294 312 320","R 297 309 352 470","R 322 351 422 518","G 370 402 422 548","G 378 390 404 455",
    "R 294 390 480 497","R 423 477 594 628","G 498 531 594 625","G 465 507 533 730","R 405 507 594 638",
    "G 503 546 594 638","G 453 462 548 582","G 363 411 465 480","G 288 360 414 520","R 353 360 429 480",
    "R 408 426 438 490","R 432 435 579 590","R 573 576 681 790","R 636 678 690 720","R 678 687 720 755",
    "R 705 717 738 805","R 700 735 750 800","G 682 735 750 790","G 702 729 735 770","G 630 645 732 732",
    "R 595 645 669 675","G 448 468 669 698","R 456 468 908 918","G 642 675 908 1120","R 636 675 966 978",
    "G 892 915 966 1058","G 867 882 918 950","G 738 756 885 965","G 548 621 759 795","G 580 597 624 690",
    "G 445 534 600 642","R 470 534 591 615","R 568 588 636 690","R 618 633 717 758","G 612 667 717 815",
    "G 565 609 669 708","G 530 555 612 640","G 372 537 558 582","R 510 537 579 630","G 460 498 579 630",
    "R 375 498 639 795"
  ];
  const second = [
    "G 540 660 760 790","G 410 459 662 680","G 415 444 462 527","G 296 405 447 475","G 330 369 408 472",
    "R 340 369 450 466","G 350 369 447 460","G 192 222 372 418","R 213 222 396 402","R 305 393 621 658",
    "G 555 616 620 795","R 567 615 636 690","R 630 633 726 780","G 650 663 726 750","R 628 663 672 712",
    "G 598 627 672 680","R 618 627 650 690","R 618 648 650 672","R 645 651 712 745","R 680 712 760 850",
    "R 720 755 807 835","G 780 795 807 885","G 730 759 798 840","G 700 723 762 795","G 640 660 726 770",
    "G 585 636 663 695","G 537 582 639 650","R 578 582 618 655","R 600 616 624 685","R 605 621 687 770",
    "G 575 627 687 700","R 620 627 666 770","G 484 516 666 670","G 395 399 519 520","G 320 360 402 450",
    "G 246 309 363 383","R 297 309 381 405","R 375 378 420 485","G 395 417 444 475","G 387 387 444 510",
    "R 305 387 468 500","R 370 465 492 495","G 313 324 492 505","G 54 117 327 355","R 108 117 201 275",
    "R 165 198 240 260","R 232 237 426 475","G 345 405 426 455","R 358 405 456 482","R 420 453 456 645",
    "R 410 453 489 515","G 462 477 489 565","R 470 477 545 600","R 530 540 603 705","R 560 600 714 768",
    "R 690 711 756 850","G 722 735 756 775","R 690 735 744 768","G 665 696 747 750","G 655 693 696 728",
    "R 660 693 720 730","R 710 717 759 810","R 745 757 768 785","R 765 768 801 845","G 726 729 801 870",
    "R 668 729 744 806"
  ];

  // cloud first, then zones, then candles and drawings on top
  add("polygon", {fill: CLOUD_G, stroke: "#f3b9b4", "stroke-width": 0.7, points:
    "493,843 497,813 504,795 520,783 542,733 551,729 560,700 563,680 565,667 582,648 598,647 613,633 626,613 636,590 651,586 670,543 678,533 689,507 695,470 709,460 732,453 758,411 772,422 787,445 842,445 880,445 902,457 910,477 " +
    "902,498 887,498 880,527 873,533 862,573 848,637 832,680 823,702 780,706 760,720 696,720 689,768 627,769 620,776 567,777 559,817 551,826 497,826"});
  add("polygon", {fill: CLOUD_R, points: "920,475 1090,477 1088,483 1072,502 1059,507 1025,523 1003,522 996,528 934,528"});
  add("polygon", {fill: CLOUD_G, stroke: "#f3b9b4", "stroke-width": 0.7, points:
    "1090,477 1103,468 1128,460 1139,428 1157,416 1192,416 1201,423 1208,443 1233,455 1255,456 1268,447 1295,447 1309,440 1324,428 1338,418 1371,418 1384,397 1393,397 1398,365 1425,365 1438,357 1446,366 1460,366 1474,378 1485,396 " +
    "1460,396 1454,401 1413,401 1402,406 1398,406 1391,428 1362,428 1353,453 1344,453 1331,467 1315,477 1291,478 1130,479 1117,496 1108,495 1099,482"});
  add("polygon", {fill: CLOUD_R, points: "1485,396 1568,396 1568,444 1554,444 1536,430 1516,422 1492,415"});

  [[498,310.5,1370,338.5],[60,477,1385,497],[735,620,1324,649],[60,738,1316,769]].forEach(r => {
    add("rect", {x: r[0], y: r[1], width: r[2]-r[0], height: r[3]-r[1], fill: "#3358e0", "fill-opacity": 0.2, stroke: "#3d63d4", "stroke-width": 1.2});
  });
  add("path", {d: "M70 487.5H1682", stroke: "#c2185b", "stroke-width": 1, "stroke-dasharray": "1.5 2.5"});

  function candle(x, c, wt, bt, bb, wb) {
    const color = c === "G" ? GREEN : RED;
    add("rect", {x: x-0.5, y: wt, width: 1, height: wb-wt, fill: color});
    add("rect", {x: x-2.5, y: bt, width: 5, height: Math.max(bb-bt, 2), fill: color});
  }
  candle(276.5, "G", 829, 829, 844, 844);
  candle(284, "G", 737, 753, 830, 834);
  candle(291, "R", 721, 753, 756, 771);
  first.forEach((s, i) => {
    const p = s.split(" ");
    const y = v => 280 + v/3;
    candle(299.1 + i*7.643, p[0], y(+p[1]), y(+p[2]), y(+p[3]), y(+p[4]));
  });
  second.forEach((s, i) => {
    const p = s.split(" ");
    const y = v => 240 + v/3;
    candle(880 + i*7.643, p[0], y(+p[1]), y(+p[2]), y(+p[3]), y(+p[4]));
  });

  add("path", {d: "M750 651L1400 359M1323 456L1537 482M1301 524L1453 540", stroke: "#1a1a1a", "stroke-width": 1.2, fill: "none"});
  add("circle", {cx: 1262, cy: 319, r: 1, fill: "#35c6c6"});

  const sans = "Roboto, sans-serif", tabular = "'DejaVu Sans', sans-serif";
  [["2713",1396,324],["2511",1410,480],["2359",1348,624],["2233",1342,746]].forEach(t => {
    add("text", {x: t[1], y: t[2], "font-family": sans, "font-size": 16, "font-weight": 500, fill: "#111"}, t[0]);
  });

  // price scale
  [["2,900.00",166],["2,800.00",251],["2,700.00",337],["2,600.00",422.5],["2,400.00",593],["2,300.00",678.5],["2,200.00",763.5]].forEach(t => {
    add("text", {x: 1847, y: t[1], "text-anchor": "end", "font-family": tabular, "font-size": 15.5, fill: "#131722", stroke: "#131722", "stroke-width": 0.3}, t[0]);
  });

  // time scale
  [["5",115],["7",207],["9",299],["11",390],["13",483],["15",574],["17",666],["19",758],["21",849],["23",941],["25",1033],["27",1125],["29",1216],["Jun",1354],["3",1445],["5",1537],["7",1629],["9",1720]].forEach(t => {
    add("text", {x: t[1], y: 870, "text-anchor": "middle", "font-family": sans, "font-size": 16, fill: "#131722"}, t[0]);
  });
  add("path", {d: "M1808 860l6-3.500 6 3.500v7l-6 3.500-6-3.500z", fill: "none", stroke: "#131722"});
  add("circle", {cx: 1814, cy: 863.5, r: 2, fill: "none", stroke: "#131722"});

  // watermark
  const logo = add("g", {transform: "translate(85 804) scale(1.05)", fill: "#131722"});
  logo.innerHTML = '<path d="M14 22H7V11H0V4h14v18zM28 22h-8l7.5-18h8L28 22z"/><circle cx="20" cy="8" r="4"/>';
  add("text", {x: 131, y: 827, "font-family": sans, "font-size": 27, "font-weight": 500, fill: "#131722", stroke: "#fff", "stroke-width": 3, "paint-order": "stroke"}, "TradingView");

  // lightning badge
  add("circle", {cx: 1377, cy: 828, r: 12.5, fill: "none", stroke: "#a83cd8", "stroke-width": 2});
  add("path", {d: "M1379 820l-6 9h4l-2 7 7-10h-4z", fill: "#a83cd8"});
</script>
</body>
</html>
